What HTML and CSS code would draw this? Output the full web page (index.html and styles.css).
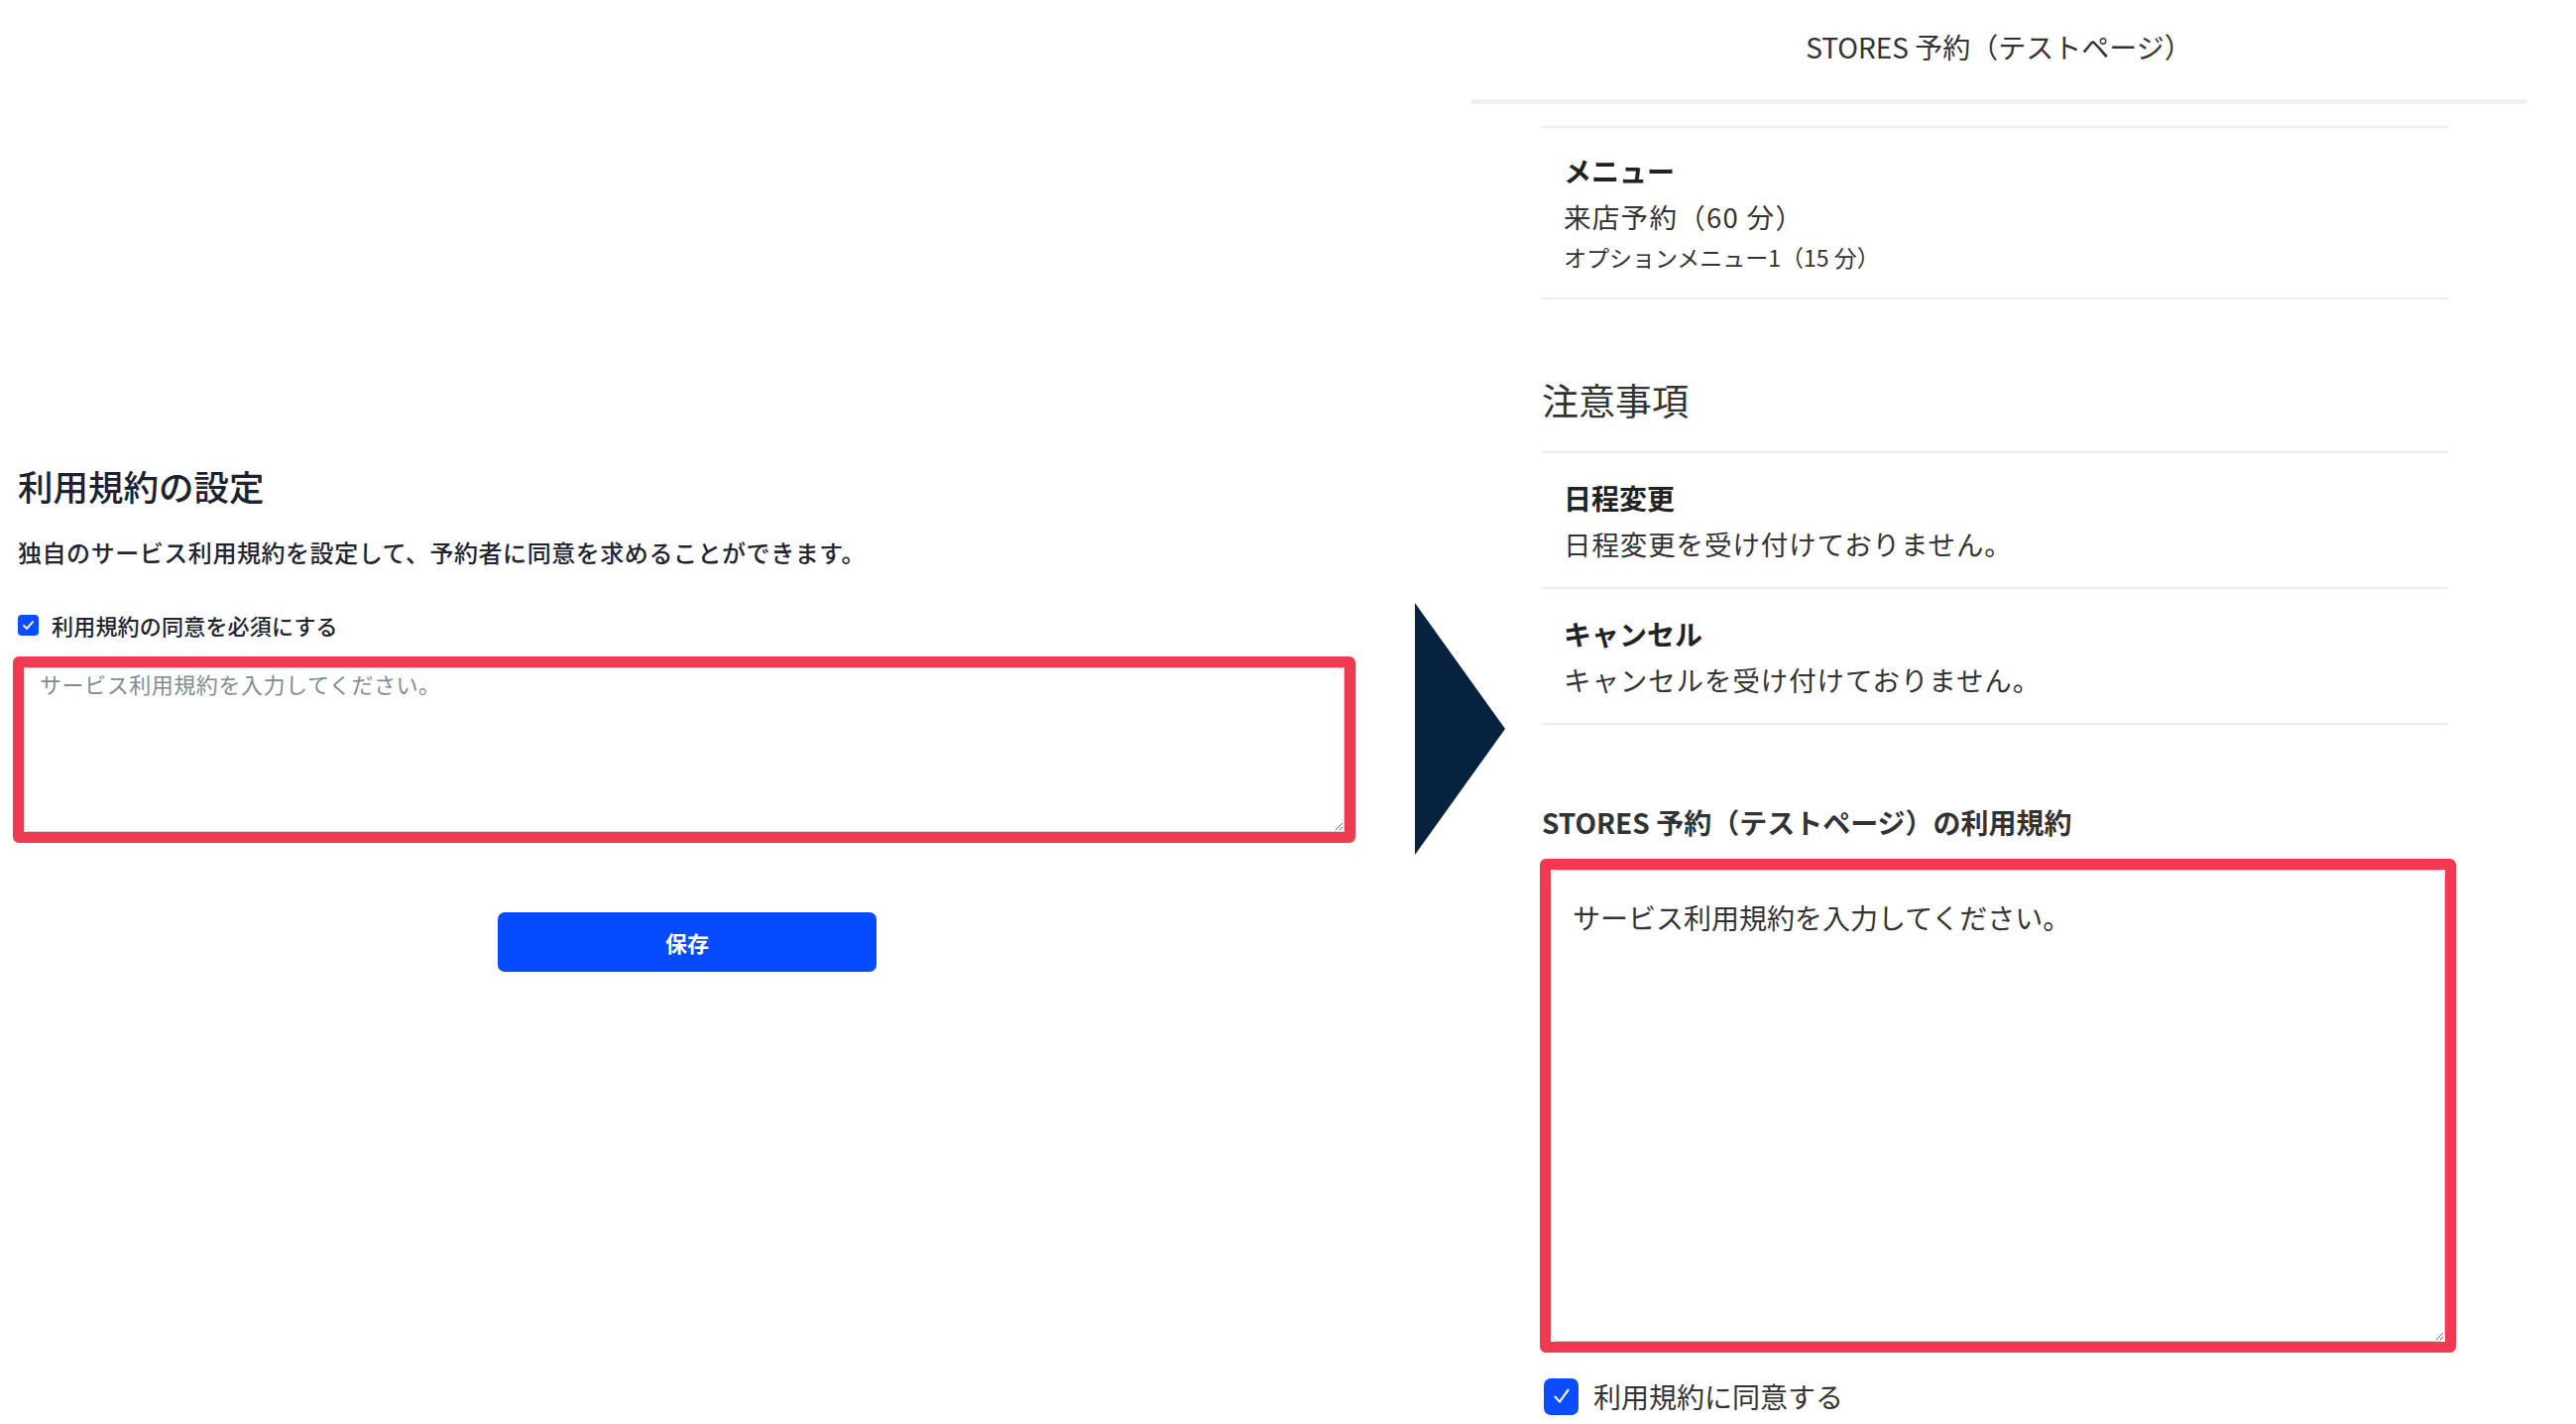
FILE: index.html
```html
<!DOCTYPE html>
<html lang="ja">
<head>
<meta charset="utf-8">
<title>利用規約の設定</title>
<link rel="stylesheet" href="styles.css">
</head>
<body>
<div class="page">
  <section class="admin">
    <h2 class="admin-title">利用規約の設定</h2>
    <p class="admin-desc">独自のサービス利用規約を設定して、予約者に同意を求めることができます。</p>
    <label class="admin-check">
      <span class="cb cb-sm"><svg viewBox="0 0 20 20" width="15" height="15"><path d="M4 10.5l4 4 8-9" fill="none" stroke="#fff" stroke-width="2.6" stroke-linecap="round" stroke-linejoin="round"/></svg></span>
      <span class="admin-check-text">利用規約の同意を必須にする</span>
    </label>
    <div class="frame frame-admin">
      <textarea class="ta ta-admin" placeholder="サービス利用規約を入力してください。"></textarea>
    </div>
    <div class="actions">
      <button class="save" type="button">保存</button>
    </div>
  </section>

  <div class="arrow">
    <svg viewBox="0 0 91 254" width="91" height="254"><polygon points="0,0 91,127 0,254" fill="#06223e"/></svg>
  </div>

  <section class="preview">
    <header class="pv-header">STORES 予約（テストページ）</header>
    <div class="pv-body">
      <div class="pv-block">
        <div class="pv-label">メニュー</div>
        <div class="pv-main">来店予約（60 分）</div>
        <div class="pv-sub">オプションメニュー1（15 分）</div>
      </div>

      <h3 class="pv-section">注意事項</h3>
      <div class="pv-list">
        <div class="pv-item">
          <div class="pv-label">日程変更</div>
          <div class="pv-desc">日程変更を受け付けておりません。</div>
        </div>
        <div class="pv-item">
          <div class="pv-label">キャンセル</div>
          <div class="pv-desc">キャンセルを受け付けておりません。</div>
        </div>
      </div>

      <h4 class="pv-terms-title">STORES 予約（テストページ）の利用規約</h4>
      <div class="frame frame-pv">
        <textarea class="ta ta-pv" readonly>サービス利用規約を入力してください。</textarea>
      </div>
      <label class="pv-check">
        <span class="cb cb-lg"><svg viewBox="0 0 20 20" width="24" height="24"><path d="M4.5 10.5l3.8 4.2 7.2-10" fill="none" stroke="#fff" stroke-width="1.8" stroke-linecap="round" stroke-linejoin="round"/></svg></span>
        <span class="pv-check-text">利用規約に同意する</span>
      </label>
    </div>
  </section>
</div>
</body>
</html>
```

FILE: styles.css
```css
* { box-sizing: border-box; }

html, body {
  margin: 0;
  padding: 0;
  background: #ffffff;
}

body {
  font-family: "Noto Sans CJK JP", "Noto Sans", sans-serif;
  color: #333333;
}

.page {
  position: relative;
  display: flex;
  width: 2598px;
  height: 1436px;
  overflow: hidden;
}

/* ---------- left: admin settings ---------- */
.admin {
  width: 1484px;
  flex: 0 0 1484px;
  padding: 469px 0 0 13px;
}

.admin-title {
  margin: 0 0 0 5px;
  font-size: 35.5px;
  line-height: 42px;
  font-weight: 500;
  color: #1c2231;
}

.admin-desc {
  margin: 30px 0 0 5px;
  font-size: 24px;
  line-height: 32px;
  font-weight: 500;
  letter-spacing: 0.55px;
  color: #1f2431;
}

.admin-check {
  display: flex;
  align-items: center;
  gap: 13px;
  height: 32px;
  margin: 41px 0 0 5px;
  font-size: 22px;
  font-weight: 500;
  letter-spacing: 0.2px;
  color: #1f2431;
}

.cb {
  display: flex;
  align-items: center;
  justify-content: center;
  background: #0a4cff;
  flex: none;
}

.cb-sm {
  width: 21px;
  height: 21px;
  border-radius: 4px;
}

.cb-lg {
  width: 35px;
  height: 37px;
  border-radius: 7px;
}

.frame {
  border: 11px solid #f03a52;
  border-radius: 6px;
  background: #ffffff;
}

.frame-admin {
  margin-top: 16px;
  width: 1354px;
  height: 188px;
}

.ta {
  display: block;
  width: 100%;
  height: 100%;
  margin: 0;
  border: 1px solid #d4d4d4;
  background: #ffffff;
  font-family: "Noto Sans CJK JP", "Noto Sans", sans-serif;
  outline: none;
}

.ta-admin {
  border-radius: 2px;
  padding: 1px 15px;
  font-size: 22px;
  line-height: 28px;
  letter-spacing: 0.55px;
  color: #333333;
}

.ta-admin::placeholder {
  color: #7f8d8d;
  opacity: 1;
}

.actions {
  width: 1354px;
  margin-top: 70px;
  display: flex;
  justify-content: center;
}

.save {
  width: 382px;
  height: 60px;
  border: none;
  border-radius: 7px;
  background: #074bff;
  color: #ffffff;
  font-family: "Noto Sans CJK JP", "Noto Sans", sans-serif;
  font-size: 22px;
  font-weight: 700;
  margin-left: 6px;
}

/* ---------- arrow ---------- */
.arrow {
  position: absolute;
  left: 1427px;
  top: 608px;
  width: 91px;
  height: 254px;
  z-index: 2;
}

.arrow svg { display: block; }

/* ---------- right: booking preview ---------- */
.preview {
  width: 1064px;
  flex: 0 0 1064px;
}

.pv-header {
  height: 105px;
  padding-bottom: 6px;
  display: flex;
  align-items: center;
  justify-content: center;
  font-size: 28px;
  color: #333333;
  border-bottom: 5px solid #f0f0f0;
}

.pv-body {
  padding: 22px 79px 0 71px;
}

.pv-block {
  border-top: 2px solid #ededed;
  border-bottom: 2px solid #ededed;
  padding: 23px 0 24px 22px;
}

.pv-label {
  font-size: 28px;
  line-height: 40px;
  font-weight: 700;
  color: #222222;
}

.pv-main {
  margin-top: 6px;
  font-size: 27.5px;
  line-height: 40px;
  letter-spacing: 1.3px;
  color: #333333;
}

.pv-sub {
  margin-top: 4px;
  font-size: 23px;
  line-height: 34px;
  color: #333333;
}

.pv-section {
  margin: 77px 0 28px;
  font-size: 37px;
  line-height: 48px;
  font-weight: 400;
  color: #333333;
}

.pv-item {
  border-top: 2px solid #ededed;
  padding: 25px 0 24px 22px;
}

.pv-item:last-child {
  border-bottom: 2px solid #ededed;
}

.pv-desc {
  margin-top: 6px;
  font-size: 27.5px;
  line-height: 40px;
  letter-spacing: 0.9px;
  color: #333333;
}

.pv-terms-title {
  margin: 78px 0 0;
  font-size: 28px;
  line-height: 40px;
  font-weight: 700;
  color: #333333;
}

.frame-pv {
  margin: 17px 0 0 -2px;
  width: 924px;
  height: 498px;
}

.ta-pv {
  border-radius: 8px;
  padding: 27px 21px;
  font-size: 28px;
  line-height: 40px;
  color: #333333;
}

.pv-check {
  display: flex;
  align-items: center;
  gap: 15px;
  margin: 24px 0 0 2px;
  font-size: 28px;
  color: #333333;
}
```
